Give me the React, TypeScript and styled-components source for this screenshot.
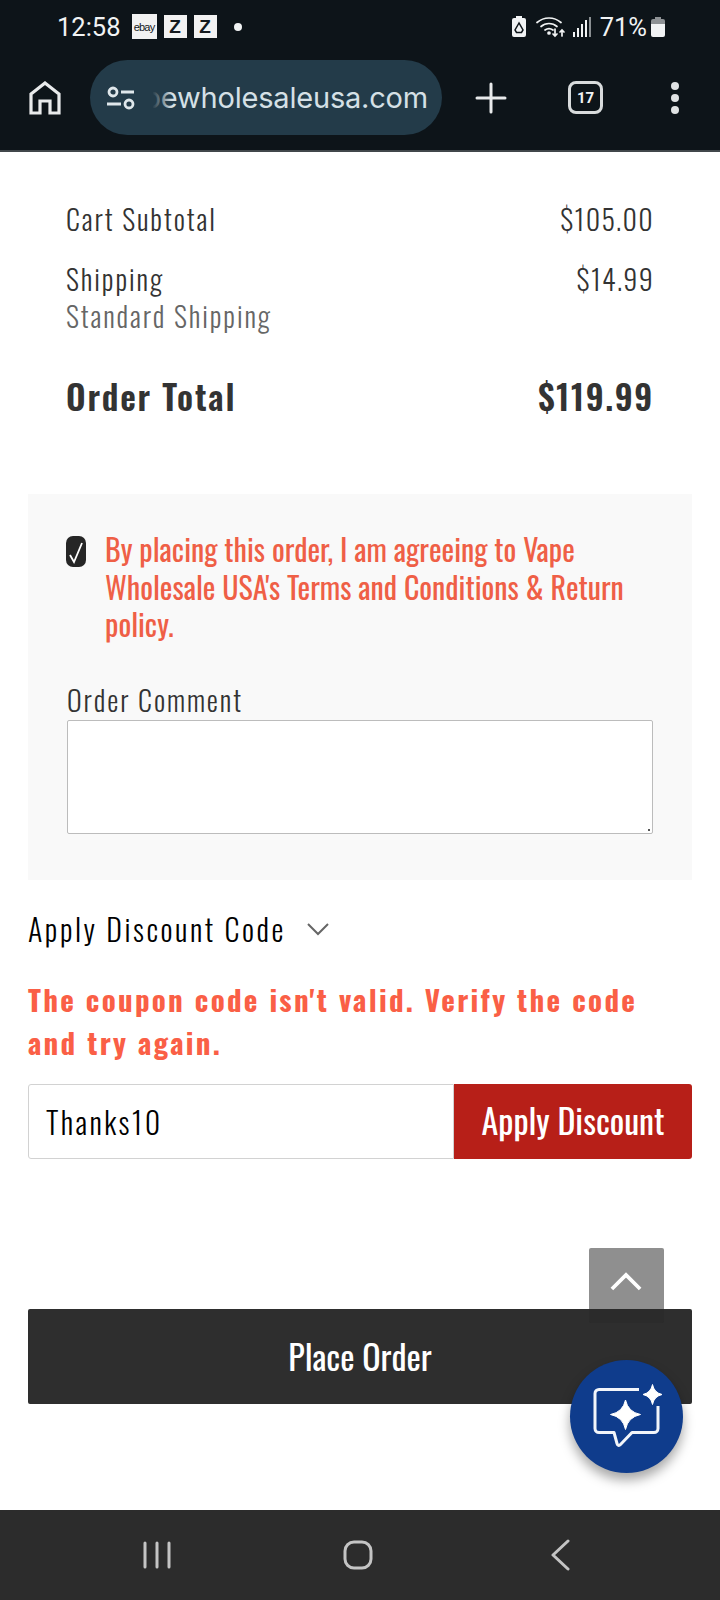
import React from "react";
import styled, { createGlobalStyle } from "styled-components";

const oswald = `Oswald, "Liberation Sans", sans-serif`;

const GlobalStyle = createGlobalStyle`
  html, body {
    margin: 0;
    padding: 0;
    background: #fff;
  }
  * {
    box-sizing: border-box;
  }
`;

const Screen = styled.div`
  position: relative;
  width: 720px;
  height: 1600px;
  display: flex;
  flex-direction: column;
  overflow: hidden;
  font-family: ${oswald};
  font-weight: 300;
`;

const Header = styled.header`
  height: 152px;
  flex: none;
  background: #0d1419;
  border-bottom: 2px solid #41474b;
  color: #f1f3f4;
`;

const StatusBar = styled.div`
  height: 52px;
  padding: 1px 55px 0 57px;
  display: flex;
  align-items: center;
  font-family: Roboto, sans-serif;
  font-weight: 400;
`;

const Clock = styled.span`
  font-size: 25.5px;
  margin-right: 11px;
`;

const Badge = styled.span<{ $small?: boolean }>`
  width: ${(p) => (p.$small ? 25 : 23)}px;
  height: ${(p) => (p.$small ? 25 : 23)}px;
  margin-right: 7px;
  background: #f2f2f2;
  color: #14191d;
  display: flex;
  align-items: center;
  justify-content: center;
  font-family: "Liberation Sans", sans-serif;
  font-weight: ${(p) => (p.$small ? 400 : 700)};
  font-size: ${(p) => (p.$small ? "11px" : "19px")};
  letter-spacing: ${(p) => (p.$small ? "-0.8px" : "0")};
  overflow: hidden;
`;

const Dot = styled.span`
  width: 8px;
  height: 8px;
  border-radius: 50%;
  background: #f1f3f4;
  margin-left: 10px;
`;

const StatusRight = styled.div`
  margin-left: auto;
  display: flex;
  align-items: center;
`;

const StatusIcon = styled.span<{ $ml: number }>`
  display: flex;
  margin-left: ${(p) => p.$ml}px;
`;

const Percent = styled.span`
  font-size: 25.5px;
  margin-left: 9px;
`;

const Toolbar = styled.div`
  height: 98px;
  display: flex;
  align-items: flex-start;
  padding: 8px 0 0 0;
`;

const HomeSlot = styled.div`
  width: 90px;
  height: 75px;
  display: flex;
  align-items: center;
  justify-content: center;
`;

const Omnibox = styled.div`
  width: 352px;
  height: 75px;
  border-radius: 38px;
  background: #233b49;
  display: flex;
  align-items: center;
  padding: 0 14px 0 16px;
  gap: 10px;
`;

const UrlClip = styled.div`
  position: relative;
  flex: 1;
  overflow: hidden;
  display: flex;
  justify-content: flex-end;
  white-space: nowrap;
  font-family: Inter, Roboto, sans-serif;
  font-weight: 400;
  font-size: 29px;
  line-height: 40px;
  color: #d5e0e6;
  letter-spacing: -0.2px;

  &::before {
    content: "";
    position: absolute;
    left: 0;
    top: 0;
    bottom: 0;
    width: 26px;
    background: linear-gradient(to right, #233b49 25%, rgba(35, 59, 73, 0));
  }
`;

const ToolSlot = styled.div<{ $width: number }>`
  width: ${(p) => p.$width}px;
  height: 75px;
  display: flex;
  align-items: center;
  justify-content: center;
`;

const TabCount = styled.div`
  width: 35px;
  height: 33px;
  border: 3px solid #d8dbdc;
  border-radius: 8px;
  display: flex;
  align-items: center;
  justify-content: center;
  font-family: Roboto, sans-serif;
  font-weight: 700;
  font-size: 15px;
`;

const Main = styled.main`
  flex: 1;
  display: flex;
  flex-direction: column;
  padding: 0 28px;
  background: #fff;
`;

const Summary = styled.section`
  padding: 49px 39px 0 38px;
  color: #333;
  height: 342px;
`;

const Row = styled.div<{ $mb?: number; $mt?: number }>`
  display: flex;
  justify-content: space-between;
  margin-top: ${(p) => p.$mt ?? 0}px;
  margin-bottom: ${(p) => p.$mb ?? 0}px;
`;

const Text = styled.div`
  font-size: 28px;
  line-height: 36px;
  letter-spacing: 1.9px;
  color: #333;
`;

const Amount = styled(Text)`
  letter-spacing: 1.3px;
  margin-right: -1px;
`;

const Muted = styled(Text)`
  color: #666;
  margin-top: 1px;
`;

const Total = styled.div`
  font-size: 34px;
  line-height: 44px;
  font-weight: 600;
  letter-spacing: 1.8px;
  color: #333;
`;

const TotalAmount = styled(Total)`
  letter-spacing: 1.6px;
  margin-right: -1px;
`;

const Panel = styled.section`
  background: #f9f9f9;
  height: 386px;
  padding: 36px 39px 0 38px;
`;

const Agree = styled.div`
  display: flex;
  align-items: flex-start;
  gap: 19px;
  height: 152px;
`;

const Check = styled.span`
  flex: none;
  margin-top: 6px;
  width: 20px;
  height: 31px;
  border-radius: 7px;
  background: #262626;
  display: flex;
  align-items: center;
  justify-content: center;
`;

const AgreeText = styled.div`
  font-size: 30px;
  line-height: 37.5px;
  font-weight: 400;
  color: #ef5f46;
`;

const FieldLabel = styled(Text)`
  padding-left: 1px;
  height: 38px;
`;

const Comment = styled.div`
  position: relative;
  margin-left: 1px;
  height: 114px;
  background: #fff;
  border: 1px solid #bcbcbc;
  border-radius: 2px;
`;

const Grip = styled.span`
  position: absolute;
  right: 2px;
  bottom: 2px;
  width: 2px;
  height: 2px;
  background: #555;
`;

const Toggle = styled.div`
  margin-top: 29px;
  display: flex;
  align-items: center;
  gap: 21px;
  font-size: 30px;
  line-height: 40px;
  letter-spacing: 2.55px;
  color: #000;
`;

const ErrorMessage = styled.div`
  margin-top: 28px;
  font-size: 29px;
  line-height: 43px;
  font-weight: 700;
  letter-spacing: 2.28px;
  color: #fa5f46;
`;

const CouponRow = styled.div`
  margin-top: 21px;
  display: flex;
  height: 75px;
`;

const CouponInput = styled.div`
  width: 426px;
  border: 1px solid #d2d2d2;
  border-radius: 3px 0 0 3px;
  padding-left: 17px;
  display: flex;
  align-items: center;
  font-size: 30px;
  letter-spacing: 2.4px;
  color: #000;
`;

const ApplyButton = styled.button`
  flex: 1;
  border: 0;
  border-radius: 0 3px 3px 0;
  padding: 0 0 4px 0;
  background: #b71f18;
  color: #fff;
  font-family: ${oswald};
  font-weight: 400;
  font-size: 34px;
`;

const PlaceOrder = styled.button`
  margin-top: 150px;
  height: 95px;
  border: 0;
  border-radius: 2px;
  padding: 0 0 2px 0;
  background: #2e2e2e;
  color: #fff;
  font-family: ${oswald};
  font-weight: 400;
  font-size: 34px;
`;

const BackToTop = styled.div`
  position: absolute;
  left: 589px;
  top: 1248px;
  width: 75px;
  height: 75px;
  border-radius: 2px;
  background: rgba(40, 40, 40, 0.52);
  display: flex;
  align-items: flex-start;
  justify-content: center;
  padding: 24px 2px 0 0;
`;

const ChatBubble = styled.div`
  position: absolute;
  left: 570px;
  top: 1360px;
  width: 113px;
  height: 113px;
  border-radius: 50%;
  background: #0f3c8c;
  box-shadow: 0 7px 12px rgba(0, 0, 0, 0.35);
  display: flex;
  align-items: center;
  justify-content: center;
`;

const NavBar = styled.nav`
  flex: none;
  height: 90px;
  background: #2c2c2c;
  display: flex;
  align-items: center;
  gap: 172px;
  padding-left: 143px;
`;

const Battery = () => (
  <svg width="14" height="21" viewBox="0 0 14 21">
    <path d="M4 0h6v2h2a2 2 0 0 1 2 2v15a2 2 0 0 1-2 2H2a2 2 0 0 1-2-2V4a2 2 0 0 1 2-2h2z" fill="#f1f3f4" />
    <path d="M7 7L3 14l1.500 2.500h5L11 14z" fill="none" stroke="#0d1419" strokeWidth="1.500" />
  </svg>
);

const Wifi = () => (
  <svg width="30" height="22" viewBox="0 0 30 22" fill="none" stroke="#f1f3f4" strokeWidth="1.700" strokeLinecap="round">
    <path d="M1 6.500C8 0.500 18 0.500 25 6.500" />
    <path d="M5 10.500c4.500-4 11.500-4 16 0" />
    <path d="M9 14c2.500-1.800 5.500-1.800 8 0" />
    <circle cx="13" cy="17" r="1" fill="#f1f3f4" />
    <path d="M19 13v7M17 18l2 2 2-2M26 20v-6M24 16l2-2 2 2" />
  </svg>
);

const Signal = () => (
  <svg width="18" height="20" viewBox="0 0 18 20">
    <rect x="0" y="15" width="2" height="5" fill="#f1f3f4" />
    <rect x="4" y="11" width="2" height="9" fill="#f1f3f4" />
    <rect x="8" y="7" width="2" height="13" fill="#f1f3f4" />
    <rect x="12" y="3" width="2" height="17" fill="#f1f3f4" />
    <rect x="16" y="0" width="2" height="20" fill="#8a8f92" />
  </svg>
);

const BatteryLevel = () => (
  <svg width="14" height="20" viewBox="0 0 14 20">
    <path d="M4 0h6v2h2a2 2 0 0 1 2 2v3H0V4a2 2 0 0 1 2-2h2z" fill="#8d9194" />
    <path d="M0 7h14v11a2 2 0 0 1-2 2H2a2 2 0 0 1-2-2z" fill="#f1f3f4" />
  </svg>
);

const HomeIcon = () => (
  <svg width="32" height="34" viewBox="0 0 32 34" fill="none" stroke="#e8eaeb" strokeWidth="3.200">
    <path d="M2 32V13L16 2l14 11v19h-9V20H11v12z" strokeLinejoin="miter" />
  </svg>
);

const TuneIcon = () => (
  <svg width="30" height="24" viewBox="0 0 30 24" fill="none" stroke="#dfe7eb" strokeWidth="2.800" style={{ flex: "none" }}>
    <circle cx="7" cy="6" r="4" />
    <path d="M15 6h13M1 18h14" />
    <circle cx="23" cy="18" r="4" />
  </svg>
);

const App = () => (
  <>
    <GlobalStyle />
    <Screen>
      <Header>
        <StatusBar>
          <Clock>12:58</Clock>
          <Badge $small>ebay</Badge>
          <Badge>Z</Badge>
          <Badge>Z</Badge>
          <Dot />
          <StatusRight>
            <StatusIcon $ml={0}>
              <Battery />
            </StatusIcon>
            <StatusIcon $ml={10}>
              <Wifi />
            </StatusIcon>
            <StatusIcon $ml={7}>
              <Signal />
            </StatusIcon>
            <Percent>71%</Percent>
            <StatusIcon $ml={4}>
              <BatteryLevel />
            </StatusIcon>
          </StatusRight>
        </StatusBar>
        <Toolbar>
          <HomeSlot>
            <HomeIcon />
          </HomeSlot>
          <Omnibox>
            <TuneIcon />
            <UrlClip>vapewholesaleusa.com</UrlClip>
          </Omnibox>
          <ToolSlot $width={98}>
            <svg width="32" height="32" viewBox="0 0 32 32" stroke="#e8eaeb" strokeWidth="3" strokeLinecap="round">
              <path d="M16 2v28M2 16h28" />
            </svg>
          </ToolSlot>
          <ToolSlot $width={91}>
            <TabCount>17</TabCount>
          </ToolSlot>
          <ToolSlot $width={88}>
            <svg width="10" height="34" viewBox="0 0 10 34" fill="#e0e3e4">
              <circle cx="5" cy="5" r="4" />
              <circle cx="5" cy="17" r="4" />
              <circle cx="5" cy="29" r="4" />
            </svg>
          </ToolSlot>
        </Toolbar>
      </Header>
      <Main>
        <Summary>
          <Row $mb={24}>
            <Text>Cart Subtotal</Text>
            <Amount>$105.00</Amount>
          </Row>
          <Row>
            <Text>Shipping</Text>
            <Amount>$14.99</Amount>
          </Row>
          <Muted>Standard Shipping</Muted>
          <Row $mt={40}>
            <Total>Order Total</Total>
            <TotalAmount>$119.99</TotalAmount>
          </Row>
        </Summary>
        <Panel>
          <Agree>
            <Check>
              <svg width="16" height="24" viewBox="0 0 16 24" fill="none" stroke="#fff" strokeWidth="1.800">
                <path d="M2 15l4 7 8-19" />
              </svg>
            </Check>
            <AgreeText>
              By placing this order, I am agreeing to Vape Wholesale USA's Terms and Conditions &amp; Return policy.
            </AgreeText>
          </Agree>
          <FieldLabel>Order Comment</FieldLabel>
          <Comment>
            <Grip />
          </Comment>
        </Panel>
        <Toggle>
          Apply Discount Code
          <svg width="22" height="13" viewBox="0 0 22 13" fill="none" stroke="#666" strokeWidth="2">
            <path d="M1 1l10 10L21 1" />
          </svg>
        </Toggle>
        <ErrorMessage>The coupon code isn't valid. Verify the code and try again.</ErrorMessage>
        <CouponRow>
          <CouponInput>Thanks10</CouponInput>
          <ApplyButton>Apply Discount</ApplyButton>
        </CouponRow>
        <PlaceOrder>Place Order</PlaceOrder>
      </Main>
      <NavBar>
        <svg width="28" height="28" viewBox="0 0 28 28" stroke="#c4c4c4" strokeWidth="3" strokeLinecap="round">
          <path d="M2 2v24M14 2v24M26 2v24" />
        </svg>
        <svg width="30" height="30" viewBox="0 0 30 30" fill="none" stroke="#c4c4c4" strokeWidth="3">
          <rect x="2" y="2" width="26" height="26" rx="9" />
        </svg>
        <svg width="26" height="32" viewBox="0 0 26 32" fill="none" stroke="#c4c4c4" strokeWidth="3" strokeLinecap="round" strokeLinejoin="round">
          <path d="M23 2L8 16l15 14" />
        </svg>
      </NavBar>
      <BackToTop>
        <svg width="32" height="19" viewBox="0 0 34 20" fill="none" stroke="#fff" strokeWidth="4">
          <path d="M2 18L17 3l15 15" />
        </svg>
      </BackToTop>
      <ChatBubble>
        <svg width="72" height="68" viewBox="0 0 72 68" fill="none">
          <path d="M48 6.500H8a4 4 0 0 0-4 4v35a4 4 0 0 0 4 4h15l3 11c.5 2 2 2.500 3.500 1L41 49.500h22a4 4 0 0 0 4-4V23" stroke="#f2f5fa" strokeWidth="3" strokeLinejoin="round" />
          <path d="M34.500 17Q37 29 49.500 31.500 37 34 34.500 46.500 32 34 19.500 31.500 32 29 34.500 17z" fill="#fff" stroke="#fff" strokeWidth="1" strokeLinejoin="round" />
          <path d="M61.500 1.500Q63 9.500 71 11.500 63 13.500 61.500 21.500 60 13.500 52 11.500 60 9.500 61.500 1.500z" fill="#fff" stroke="#fff" strokeWidth="1" strokeLinejoin="round" />
        </svg>
      </ChatBubble>
    </Screen>
  </>
);

export default App;
